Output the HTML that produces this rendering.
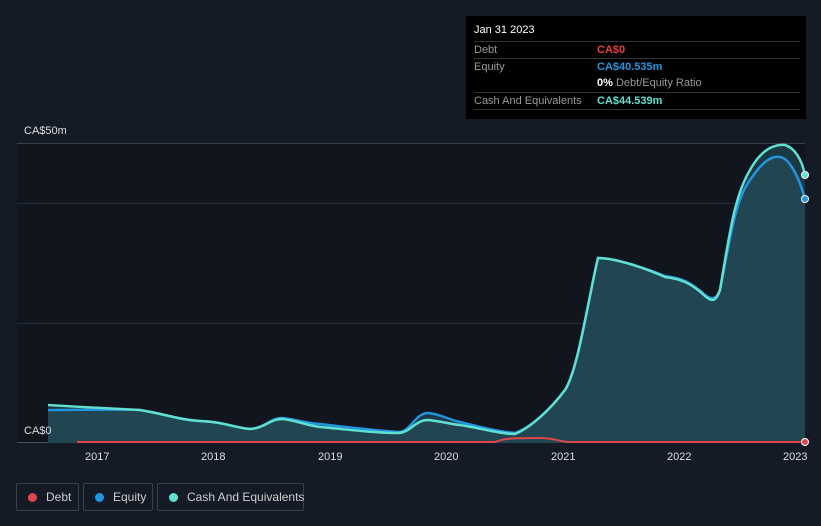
<!DOCTYPE html>
<html><head><style>
html,body{margin:0;width:821px;height:526px;overflow:hidden}
body{background:#151b26;font-family:"Liberation Sans",sans-serif;position:relative}
.tt{position:absolute;left:466px;top:16px;width:340px;height:103px;background:#000;color:#999;font-size:11px}
.tt .r{position:absolute;left:8px;width:326px;border-top:1px solid #333}
.leg{position:absolute;top:483px;height:28px;border:1px solid #3a404b;border-radius:2px;color:#ccc;font-size:12px;line-height:26px;box-sizing:border-box;white-space:nowrap}
.leg i{display:inline-block;width:9px;height:9px;border-radius:50%;margin:0 9px 0 11px;vertical-align:-1px}
.yr{position:absolute;top:451px;color:#ddd;font-size:11px}
</style></head><body>
<svg width="821" height="526" style="position:absolute;left:0;top:0">
<rect x="17" y="143" width="788" height="300" fill="#10151e"/>
<line x1="17" y1="143.5" x2="805" y2="143.5" stroke="#3a404b"/>
<line x1="17" y1="203.5" x2="805" y2="203.5" stroke="#262c37"/>
<line x1="17" y1="323.5" x2="805" y2="323.5" stroke="#262c37"/>
<line x1="17" y1="442.5" x2="805" y2="442.5" stroke="#4a505b"/>
<path d="M48,410 C80,410 120,409 140,410 C165,414 180,420 200,421 C225,422 235,428 250,429 C265,428 270,418 282,418 C295,419 305,423 320,424 C345,427 370,430 398,432 C410,433 415,413 428,413 C440,414 450,420 460,422 C480,427 500,432 515,433 C530,428 550,410 565,390 C578,370 588,300 598,258 C615,258 645,268 665,276 C680,278 690,281 705,295 C712,300 716,300 720,290 C730,240 735,200 750,180 C760,165 770,155 780,157 C790,158 800,180 805,199 L805,443 L48,443 Z" fill="#1f3a48" opacity="0.9"/>
<path d="M48,405 C80,407 120,409 140,410 C165,414 180,420 200,421 C225,422 235,428 250,429 C265,428 270,419 282,419 C295,420 305,425 320,427 C345,429 370,433 398,433 C410,433 415,420 428,420 C440,421 450,424 460,425 C480,428 500,434 515,434 C530,428 550,410 565,390 C578,370 588,300 598,258 C615,258 645,268 665,277 C680,279 690,282 705,296 C712,302 716,302 720,290 C730,230 735,195 750,170 C760,152 772,144 785,145 C795,148 802,160 805,175 L805,443 L48,443 Z" fill="#24505a" opacity="0.6"/>
<path d="M48,410 C80,410 120,409 140,410 C165,414 180,420 200,421 C225,422 235,428 250,429 C265,428 270,418 282,418 C295,419 305,423 320,424 C345,427 370,430 398,432 C410,433 415,413 428,413 C440,414 450,420 460,422 C480,427 500,432 515,433 C530,428 550,410 565,390 C578,370 588,300 598,258 C615,258 645,268 665,276 C680,278 690,281 705,295 C712,300 716,300 720,290 C730,240 735,200 750,180 C760,165 770,155 780,157 C790,158 800,180 805,199" fill="none" stroke="#2394df" stroke-width="2.5"/>
<path d="M48,405 C80,407 120,409 140,410 C165,414 180,420 200,421 C225,422 235,428 250,429 C265,428 270,419 282,419 C295,420 305,425 320,427 C345,429 370,433 398,433 C410,433 415,420 428,420 C440,421 450,424 460,425 C480,428 500,434 515,434 C530,428 550,410 565,390 C578,370 588,300 598,258 C615,258 645,268 665,277 C680,279 690,282 705,296 C712,302 716,302 720,290 C730,230 735,195 750,170 C760,152 772,144 785,145 C795,148 802,160 805,175" fill="none" stroke="#5fe0d0" stroke-width="2.5"/>
<path d="M77,442 L495,442 C505,438 515,438 540,438 C555,438 560,442 570,442 L805,442" fill="none" stroke="#e0474c" stroke-width="2"/>
<circle cx="805" cy="199" r="3.5" fill="#2394df" stroke="#fff" stroke-width="1"/>
<circle cx="805" cy="175" r="3.5" fill="#5fe0d0" stroke="#fff" stroke-width="1"/>
<circle cx="805" cy="442" r="3.5" fill="#e0474c" stroke="#fff" stroke-width="1"/>
</svg>
<div style="position:absolute;left:24px;top:125px;color:#ddd;font-size:11px">CA$50m</div>
<div style="position:absolute;left:24px;top:425px;color:#ddd;font-size:11px">CA$0</div>
<div class="yr" style="left:85px">2017</div><div class="yr" style="left:201px">2018</div><div class="yr" style="left:318px">2019</div><div class="yr" style="left:434px">2020</div><div class="yr" style="left:551px">2021</div><div class="yr" style="left:667px">2022</div><div class="yr" style="left:783px">2023</div>
<div class="tt">
<div style="position:absolute;left:8px;top:8px;color:#fff">Jan 31 2023</div>
<div class="r" style="top:25px;height:16px"><span style="position:absolute;top:2px">Debt</span><b style="position:absolute;left:123px;top:2px;color:#e8403f">CA$0</b></div>
<div class="r" style="top:42px;height:16px"><span style="position:absolute;top:2px">Equity</span><b style="position:absolute;left:123px;top:2px;color:#2394df">CA$40.535m</b></div>
<div style="position:absolute;left:131px;top:61px"><b style="color:#fff">0%</b> Debt/Equity Ratio</div>
<div class="r" style="top:76px;height:17px"><span style="position:absolute;top:2px">Cash And Equivalents</span><b style="position:absolute;left:123px;top:2px;color:#5fe0d0">CA$44.539m</b></div>
<div class="r" style="top:93px;height:0"></div>
</div>
<div class="leg" style="left:16px;width:63px"><i style="background:#e0474c"></i>Debt</div>
<div class="leg" style="left:83px;width:70px"><i style="background:#2394df"></i>Equity</div>
<div class="leg" style="left:157px;width:147px"><i style="background:#5fe0d0"></i>Cash And Equivalents</div>
</body></html>
